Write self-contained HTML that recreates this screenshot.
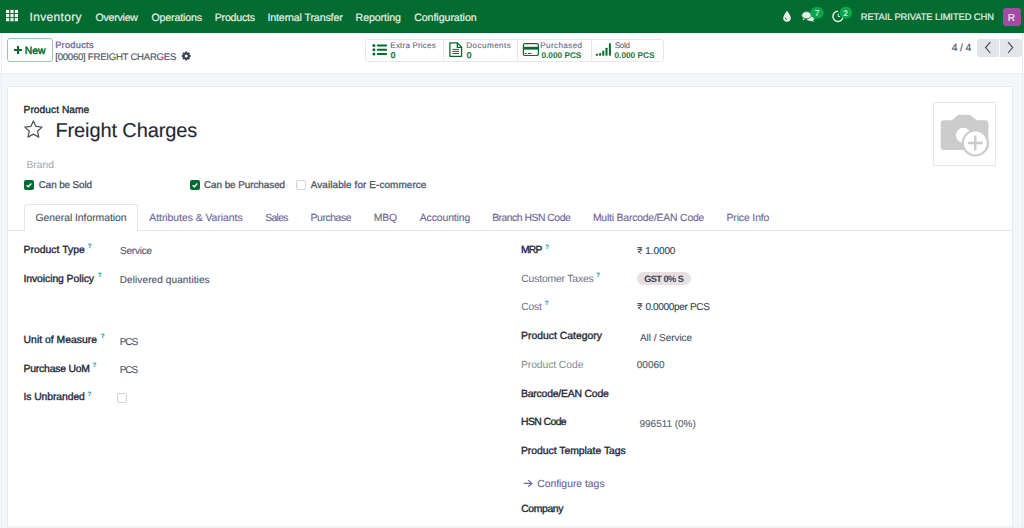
<!DOCTYPE html>
<html><head><meta charset="utf-8"><style>
html,body{text-rendering:geometricPrecision;margin:0;padding:0;width:1024px;height:528px;overflow:hidden;background:#fff;font-family:"Liberation Sans",sans-serif}
.t{position:absolute;white-space:nowrap}
.b{position:absolute}
</style></head><body>
<div class="b" style="left:0px;top:0px;width:1024px;height:33px;background:#026b2f"></div>
<svg class="b" style="left:0;top:0" width="40" height="33" viewBox="0 0 40 33"><rect x="6.00" y="9.90" width="3.2" height="3.2" fill="#eef4f0"/><rect x="6.00" y="14.00" width="3.2" height="3.2" fill="#eef4f0"/><rect x="6.00" y="18.10" width="3.2" height="3.2" fill="#eef4f0"/><rect x="10.40" y="9.90" width="3.2" height="3.2" fill="#eef4f0"/><rect x="10.40" y="14.00" width="3.2" height="3.2" fill="#eef4f0"/><rect x="10.40" y="18.10" width="3.2" height="3.2" fill="#eef4f0"/><rect x="14.80" y="9.90" width="3.2" height="3.2" fill="#eef4f0"/><rect x="14.80" y="14.00" width="3.2" height="3.2" fill="#eef4f0"/><rect x="14.80" y="18.10" width="3.2" height="3.2" fill="#eef4f0"/></svg>
<div class="t" style="left:29.62px;top:10px;font-size:12px;line-height:14px;font-weight:400;color:#e6efe8;letter-spacing:0.312px;-webkit-text-stroke:0.2px #e6efe8;">Inventory</div>
<div class="t" style="left:95.52px;top:12px;font-size:10.6px;line-height:13px;font-weight:400;color:#e6efe8;letter-spacing:-0.246px;-webkit-text-stroke:0.2px #e6efe8;">Overview</div>
<div class="t" style="left:151.52px;top:12px;font-size:10.6px;line-height:13px;font-weight:400;color:#e6efe8;letter-spacing:-0.154px;-webkit-text-stroke:0.2px #e6efe8;">Operations</div>
<div class="t" style="left:214.75px;top:12px;font-size:10.6px;line-height:13px;font-weight:400;color:#e6efe8;letter-spacing:-0.214px;-webkit-text-stroke:0.2px #e6efe8;">Products</div>
<div class="t" style="left:267.45px;top:12px;font-size:10.6px;line-height:13px;font-weight:400;color:#e6efe8;letter-spacing:-0.116px;-webkit-text-stroke:0.2px #e6efe8;">Internal Transfer</div>
<div class="t" style="left:355.55px;top:12px;font-size:10.6px;line-height:13px;font-weight:400;color:#e6efe8;letter-spacing:-0.064px;-webkit-text-stroke:0.2px #e6efe8;">Reporting</div>
<div class="t" style="left:414.17px;top:12px;font-size:10.6px;line-height:13px;font-weight:400;color:#e6efe8;letter-spacing:-0.041px;-webkit-text-stroke:0.2px #e6efe8;">Configuration</div>

<svg class="b" style="left:0;top:0" width="1024" height="33" viewBox="0 0 1024 33">
 <!-- drop -->
 <path d="M787 10.8 C787 10.8 783.2 15.6 783.2 18 A3.8 3.8 0 0 0 790.8 18 C790.8 15.6 787 10.8 787 10.8 Z" fill="#e6efe8"/>
 <path d="M785.3 17.8 a1.6 1.6 0 0 0 1.6 1.6" stroke="#026b2f" stroke-width="0.9" fill="none"/>
 <!-- chat -->
 <ellipse cx="806.5" cy="15.2" rx="4.8" ry="3.6" fill="#e6efe8"/>
 <path d="M803.5 17.5 L802.5 20.5 L806.5 18.3 Z" fill="#e6efe8"/>
 <ellipse cx="810.5" cy="18" rx="4" ry="3" fill="#e6efe8"/>
 <path d="M812.5 19.8 L814.2 22 L810 20.5 Z" fill="#e6efe8"/>
 <ellipse cx="806.5" cy="15.2" rx="4.8" ry="3.6" fill="#e6efe8" stroke="#026b2f" stroke-width="0.8"/>
 <!-- clock -->
 <path d="M843.1 16.3 A5.1 5.1 0 1 1 838 11.2" stroke="#e6efe8" stroke-width="1.5" fill="none"/>
 <path d="M838.2 13.6 V16.5 H840.2" stroke="#e6efe8" stroke-width="1" fill="none"/>
 <!-- badges -->
 <rect x="810.2" y="7" width="13.4" height="11.6" rx="5.8" fill="#0ba64c"/>
 <rect x="839.6" y="6.8" width="12.6" height="11.6" rx="5.8" fill="#0ba64c"/>
</svg>
<div class="t" style="left:814.79px;top:9px;font-size:8.2px;line-height:10px;font-weight:400;color:#e6f3ea;letter-spacing:0.069px;-webkit-text-stroke:0.1px #e6f3ea;">7</div>
<div class="t" style="left:843.29px;top:9px;font-size:8.2px;line-height:10px;font-weight:400;color:#e6f3ea;letter-spacing:0.069px;-webkit-text-stroke:0.1px #e6f3ea;">2</div>
<div class="t" style="left:860.75px;top:11px;font-size:9.4px;line-height:11px;font-weight:400;color:#e6efe8;letter-spacing:-0.095px;-webkit-text-stroke:0.2px #e6efe8;">RETAIL PRIVATE LIMITED CHN</div>
<div class="b" style="left:1003px;top:8px;width:17.5px;height:18px;background:#a34ca4;border-radius:3px"></div>
<div class="t" style="left:1007.70px;top:13px;font-size:10px;line-height:12px;font-weight:400;color:#f4e8f4;letter-spacing:1.000px;-webkit-text-stroke:0.12px #f4e8f4;">R</div>
<div class="b" style="left:0px;top:33px;width:1024px;height:40px;background:#ffffff"></div>
<div class="b" style="left:7px;top:38px;width:46px;height:24px;border:1px solid #9cc7aa;border-radius:3px;box-sizing:border-box;background:#fff"></div>
<div class="b" style="left:14.4px;top:48.8px;width:7.6px;height:2.3px;background:#026b2f"></div>
<div class="b" style="left:17.05px;top:45.6px;width:2.3px;height:8.2px;background:#026b2f"></div>
<div class="t" style="left:24.77px;top:46px;font-size:10.4px;line-height:12px;font-weight:400;color:#026b2f;letter-spacing:-0.060px;-webkit-text-stroke:0.45px #026b2f;">New</div>
<div class="t" style="left:55.16px;top:40px;font-size:9.2px;line-height:11px;font-weight:400;color:#6e6698;letter-spacing:0.295px;-webkit-text-stroke:0.3px #6e6698;">Products</div>
<div class="t" style="left:55.23px;top:52px;font-size:9.6px;line-height:12px;font-weight:400;color:#4b5563;letter-spacing:-0.253px;-webkit-text-stroke:0.15px #4b5563;">[00060] FREIGHT CHARGES</div>
<svg class="b" style="left:0;top:0" width="300" height="80" viewBox="0 0 300 80">
<path fill="#374151" fill-rule="evenodd" d="M189.29 54.84 L190.59 55.02 L190.59 56.98 L189.29 57.16 L189.21 57.36 L190.00 58.41 L188.61 59.80 L187.56 59.01 L187.36 59.09 L187.18 60.39 L185.22 60.39 L185.04 59.09 L184.84 59.01 L183.79 59.80 L182.40 58.41 L183.19 57.36 L183.11 57.16 L181.81 56.98 L181.81 55.02 L183.11 54.84 L183.19 54.64 L182.40 53.59 L183.79 52.20 L184.84 52.99 L185.04 52.91 L185.22 51.61 L187.18 51.61 L187.36 52.91 L187.56 52.99 L188.61 52.20 L190.00 53.59 L189.21 54.64 Z M187.70 56.00 A1.5 1.5 0 1 0 184.70 56.00 A1.5 1.5 0 1 0 187.70 56.00 Z"/></svg>
<div class="b" style="left:364.5px;top:39px;width:299px;height:22.5px;border:1px solid #e6e9ec;border-radius:3px;box-sizing:border-box"></div>
<div class="b" style="left:443px;top:39.5px;width:1px;height:21.5px;background:#e6e9ec"></div>
<div class="b" style="left:517px;top:39.5px;width:1px;height:21.5px;background:#e6e9ec"></div>
<div class="b" style="left:590.5px;top:39.5px;width:1px;height:21.5px;background:#e6e9ec"></div>
<div class="t" style="left:390.35px;top:41px;font-size:8.1px;line-height:10px;font-weight:400;color:#646c77;letter-spacing:0.161px;-webkit-text-stroke:0.12px #646c77;">Extra Prices</div>
<div class="t" style="left:390.67px;top:50px;font-size:8.3px;line-height:10px;font-weight:400;color:#17743f;letter-spacing:0.716px;-webkit-text-stroke:0.45px #17743f;">0</div>
<div class="t" style="left:466.35px;top:41px;font-size:8.1px;line-height:10px;font-weight:400;color:#646c77;letter-spacing:0.431px;-webkit-text-stroke:0.12px #646c77;">Documents</div>
<div class="t" style="left:466.67px;top:50px;font-size:8.3px;line-height:10px;font-weight:400;color:#17743f;letter-spacing:0.716px;-webkit-text-stroke:0.45px #17743f;">0</div>
<div class="t" style="left:540.35px;top:41px;font-size:8.1px;line-height:10px;font-weight:400;color:#646c77;letter-spacing:0.370px;-webkit-text-stroke:0.12px #646c77;">Purchased</div>
<div class="t" style="left:541.47px;top:50px;font-size:8.3px;line-height:10px;font-weight:700;color:#17743f;letter-spacing:-0.026px;">0.000 PCS</div>
<div class="t" style="left:614.64px;top:41px;font-size:8.1px;line-height:10px;font-weight:400;color:#646c77;letter-spacing:-0.270px;-webkit-text-stroke:0.12px #646c77;">Sold</div>
<div class="t" style="left:614.47px;top:50px;font-size:8.3px;line-height:10px;font-weight:700;color:#17743f;letter-spacing:-0.001px;">0.000 PCS</div>
<svg class="b" style="left:0;top:0" width="1024" height="80" viewBox="0 0 1024 80">
 <g fill="#026b2f">
  <circle cx="373.9" cy="45.4" r="1.5"/><circle cx="373.9" cy="49.7" r="1.5"/><circle cx="373.9" cy="54" r="1.5"/>
  <rect x="376.8" y="44.4" width="10.3" height="2.1" rx="0.8"/><rect x="376.8" y="48.7" width="10.3" height="2.1" rx="0.8"/><rect x="376.8" y="53" width="10.3" height="2.1" rx="0.8"/>
 </g>
 <g fill="none" stroke="#026b2f" stroke-width="1.3">
  <path d="M449.9 42.8 H457.3 L461.6 47.1 V56.3 H449.9 Z" stroke-linejoin="round"/>
  <path d="M457.3 43 V47.4 H461.4"/>
  <path d="M452.4 49.4 H459 M452.4 51.4 H459 M452.4 53.5 H459" stroke-width="1"/>
 </g>
 <g>
  <rect x="523.4" y="43.6" width="15" height="11.9" rx="1.6" fill="none" stroke="#026b2f" stroke-width="1.2"/>
  <rect x="523.4" y="46.8" width="15" height="2.8" fill="#026b2f"/>
  <rect x="524.8" y="53" width="1.8" height="1" fill="#026b2f"/><rect x="527.8" y="53" width="3.6" height="1" fill="#026b2f"/>
 </g>
 <g fill="#026b2f">
  <rect x="595.9" y="53.7" width="2.1" height="2" rx="0.4"/>
  <rect x="599.1" y="53" width="2" height="2.7" rx="0.4"/>
  <rect x="602.3" y="50.7" width="2" height="5" rx="0.4"/>
  <rect x="605.5" y="47.8" width="2" height="7.9" rx="0.4"/>
  <rect x="608.9" y="43.2" width="2" height="12.5" rx="0.4"/>
 </g>
</svg>
<div class="t" style="left:951.79px;top:43px;font-size:10.4px;line-height:12px;font-weight:400;color:#4b5563;letter-spacing:-0.177px;-webkit-text-stroke:0.12px #4b5563;">4 / 4</div>
<div class="b" style="left:977px;top:39px;width:22px;height:18px;background:#e2e5e9;border-radius:3px 0 0 3px"></div>
<div class="b" style="left:1000px;top:39px;width:22px;height:18px;background:#e2e5e9;border-radius:0 3px 3px 0"></div>
<svg class="b" style="left:0;top:0" width="1024" height="70" viewBox="0 0 1024 70">
 <path d="M990.3 42.2 L985.6 47.6 L990.3 53" stroke="#3f4753" stroke-width="1.1" fill="none"/>
 <path d="M1008 42.2 L1012.7 47.6 L1008 53" stroke="#3f4753" stroke-width="1.1" fill="none"/>
</svg>
<div class="b" style="left:0px;top:73px;width:1024px;height:455px;background:#f4f7f9"></div>
<div class="b" style="left:0px;top:73px;width:1024px;height:1px;background:#eceff1"></div>
<div class="b" style="left:7px;top:85.5px;width:1006px;height:441px;background:#fff;border:1px solid #e7eaed;border-bottom:none;border-radius:2px 2px 0 0;box-sizing:border-box"></div>
<div class="b" style="left:0px;top:526px;width:1024px;height:2px;background:#f1f3f5"></div>
<div class="b" style="left:1px;top:33px;width:1px;height:495px;background:#eceff1"></div>
<div class="b" style="left:1022px;top:33px;width:1px;height:495px;background:#e9ecef"></div>
<div class="t" style="left:23.58px;top:105px;font-size:10.2px;line-height:12px;font-weight:400;color:#1f2937;letter-spacing:0.045px;-webkit-text-stroke:0.35px #1f2937;">Product Name</div>
<svg class="b" style="left:0;top:0" width="60" height="150" viewBox="0 0 60 150">
<path d="M33.4 120.9 L36 126.4 L42 127.1 L37.5 131.2 L38.8 137.1 L33.4 134.1 L28 137.1 L29.3 131.2 L24.8 127.1 L30.8 126.4 Z" fill="none" stroke="#4b5563" stroke-width="1.25" stroke-linejoin="round"/></svg>
<div class="t" style="left:55.40px;top:119px;font-size:20px;line-height:24px;font-weight:400;color:#1f2937;letter-spacing:-0.107px;-webkit-text-stroke:0.12px #1f2937;">Freight Charges</div>
<div class="b" style="left:933px;top:102px;width:63px;height:64px;border:1px solid #e8e8e8;box-sizing:border-box;background:#fff"></div>
<svg class="b" style="left:0;top:0" width="1024" height="200" viewBox="0 0 1024 200">
 <path d="M944 120.3 H952 L958.3 114.7 H969.7 L977 120.3 H985.2 Q988.4 120.3 988.4 123.5 V146.7 Q988.4 149.9 985.2 149.9 H944 Q940.7 149.9 940.7 146.7 V123.5 Q940.7 120.3 944 120.3 Z" fill="#cccccc"/>
 <circle cx="963.4" cy="135.2" r="7.5" fill="#ffffff"/>
 <circle cx="975.3" cy="143" r="13.6" fill="#cccccc"/>
 <circle cx="975.3" cy="143" r="11.4" fill="#ffffff"/>
 <path d="M975.3 135.6 V150.4 M967.9 143 H982.7" stroke="#cccccc" stroke-width="2.4"/>
</svg>
<div class="t" style="left:26.38px;top:160px;font-size:10.2px;line-height:12px;font-weight:400;color:#a9adb2;letter-spacing:0.099px;-webkit-text-stroke:0.12px #a9adb2;">Brand</div>
<div class="b" style="left:24px;top:180px;width:10px;height:10px;background:#026b2f;border-radius:2px"></div>
<svg class="b" style="left:24px;top:180px" width="10" height="10" viewBox="0 0 10 10"><path d="M2.6 5.2 L4.3 6.8 L7.4 3.5" stroke="#fff" stroke-width="1.3" fill="none"/></svg>
<div class="t" style="left:38.71px;top:180px;font-size:9.9px;line-height:12px;font-weight:400;color:#4b5563;letter-spacing:-0.096px;-webkit-text-stroke:0.3px #4b5563;">Can be Sold</div>
<div class="b" style="left:190.4px;top:180px;width:10px;height:10px;background:#026b2f;border-radius:2px"></div>
<svg class="b" style="left:190.4px;top:180px" width="10" height="10" viewBox="0 0 10 10"><path d="M2.6 5.2 L4.3 6.8 L7.4 3.5" stroke="#fff" stroke-width="1.3" fill="none"/></svg>
<div class="t" style="left:204.00px;top:180px;font-size:9.9px;line-height:12px;font-weight:400;color:#4b5563;letter-spacing:-0.049px;-webkit-text-stroke:0.3px #4b5563;">Can be Purchased</div>
<div class="b" style="left:295.6px;top:180px;width:10.2px;height:10.2px;border:1px solid #cfd3d8;border-radius:2px;box-sizing:border-box;background:#fff"></div>
<div class="t" style="left:310.70px;top:180px;font-size:9.9px;line-height:12px;font-weight:400;color:#4b5563;letter-spacing:0.121px;-webkit-text-stroke:0.3px #4b5563;">Available for E-commerce</div>
<div class="b" style="left:8px;top:230px;width:1004px;height:1px;background:#e3e6ea"></div>
<div class="b" style="left:24.4px;top:204.4px;width:113.3px;height:27px;background:#fff;border:1px solid #e3e6ea;border-bottom:none;border-radius:3px 3px 0 0;box-sizing:border-box"></div>
<div class="t" style="left:35.48px;top:213px;font-size:10.4px;line-height:12px;font-weight:400;color:#4b5563;letter-spacing:-0.038px;-webkit-text-stroke:0.12px #4b5563;">General Information</div>
<div class="t" style="left:149.30px;top:213px;font-size:10.4px;line-height:12px;font-weight:400;color:#6e6698;letter-spacing:-0.033px;-webkit-text-stroke:0.12px #6e6698;">Attributes &amp; Variants</div>
<div class="t" style="left:265.13px;top:213px;font-size:10.4px;line-height:12px;font-weight:400;color:#6e6698;letter-spacing:-0.642px;-webkit-text-stroke:0.12px #6e6698;">Sales</div>
<div class="t" style="left:310.57px;top:213px;font-size:10.4px;line-height:12px;font-weight:400;color:#6e6698;letter-spacing:-0.434px;-webkit-text-stroke:0.12px #6e6698;">Purchase</div>
<div class="t" style="left:373.77px;top:213px;font-size:10.4px;line-height:12px;font-weight:400;color:#6e6698;letter-spacing:-0.230px;-webkit-text-stroke:0.12px #6e6698;">MBQ</div>
<div class="t" style="left:419.80px;top:213px;font-size:10.4px;line-height:12px;font-weight:400;color:#6e6698;letter-spacing:-0.106px;-webkit-text-stroke:0.12px #6e6698;">Accounting</div>
<div class="t" style="left:492.17px;top:213px;font-size:10.4px;line-height:12px;font-weight:400;color:#6e6698;letter-spacing:-0.496px;-webkit-text-stroke:0.12px #6e6698;">Branch HSN Code</div>
<div class="t" style="left:592.92px;top:213px;font-size:10.4px;line-height:12px;font-weight:400;color:#6e6698;letter-spacing:-0.193px;-webkit-text-stroke:0.12px #6e6698;">Multi Barcode/EAN Code</div>
<div class="t" style="left:726.47px;top:213px;font-size:10.4px;line-height:12px;font-weight:400;color:#6e6698;letter-spacing:-0.110px;-webkit-text-stroke:0.12px #6e6698;">Price Info</div>
<div class="t" style="left:23.57px;top:245px;font-size:10.4px;line-height:12px;font-weight:400;color:#1f2937;letter-spacing:0.009px;-webkit-text-stroke:0.35px #1f2937;">Product Type</div>
<div class="t" style="left:87.71px;top:243px;font-size:6.4px;line-height:8px;font-weight:700;color:#1a9bb5;letter-spacing:-0.264px;-webkit-text-stroke:0.12px #1a9bb5;">?</div>
<div class="t" style="left:120.05px;top:246px;font-size:10px;line-height:12px;font-weight:400;color:#4b5563;letter-spacing:-0.208px;-webkit-text-stroke:0.12px #4b5563;">Service</div>
<div class="t" style="left:23.46px;top:274px;font-size:10.4px;line-height:12px;font-weight:400;color:#1f2937;letter-spacing:-0.075px;-webkit-text-stroke:0.35px #1f2937;">Invoicing Policy</div>
<div class="t" style="left:97.71px;top:272px;font-size:6.4px;line-height:8px;font-weight:700;color:#1a9bb5;letter-spacing:-0.264px;-webkit-text-stroke:0.12px #1a9bb5;">?</div>
<div class="t" style="left:119.70px;top:275px;font-size:10px;line-height:12px;font-weight:400;color:#4b5563;letter-spacing:0.111px;-webkit-text-stroke:0.12px #4b5563;">Delivered quantities</div>
<div class="t" style="left:23.62px;top:335px;font-size:10.4px;line-height:12px;font-weight:400;color:#1f2937;letter-spacing:0.002px;-webkit-text-stroke:0.35px #1f2937;">Unit of Measure</div>
<div class="t" style="left:100.71px;top:333px;font-size:6.4px;line-height:8px;font-weight:700;color:#1a9bb5;letter-spacing:-0.264px;-webkit-text-stroke:0.12px #1a9bb5;">?</div>
<div class="t" style="left:119.70px;top:337px;font-size:10px;line-height:12px;font-weight:400;color:#4b5563;letter-spacing:-1.000px;-webkit-text-stroke:0.12px #4b5563;">PCS</div>
<div class="t" style="left:23.57px;top:364px;font-size:10.4px;line-height:12px;font-weight:400;color:#1f2937;letter-spacing:-0.207px;-webkit-text-stroke:0.35px #1f2937;">Purchase UoM</div>
<div class="t" style="left:92.41px;top:362px;font-size:6.4px;line-height:8px;font-weight:700;color:#1a9bb5;letter-spacing:-0.264px;-webkit-text-stroke:0.12px #1a9bb5;">?</div>
<div class="t" style="left:119.70px;top:365px;font-size:10px;line-height:12px;font-weight:400;color:#4b5563;letter-spacing:-1.000px;-webkit-text-stroke:0.12px #4b5563;">PCS</div>
<div class="t" style="left:23.46px;top:392px;font-size:10.4px;line-height:12px;font-weight:400;color:#1f2937;letter-spacing:-0.085px;-webkit-text-stroke:0.35px #1f2937;">Is Unbranded</div>
<div class="t" style="left:87.41px;top:391px;font-size:6.4px;line-height:8px;font-weight:700;color:#1a9bb5;letter-spacing:-0.264px;-webkit-text-stroke:0.12px #1a9bb5;">?</div>
<div class="b" style="left:117px;top:393px;width:10.2px;height:10.2px;border:1px solid #cfd3d8;border-radius:2px;box-sizing:border-box;background:#fff"></div>
<div class="t" style="left:520.97px;top:245px;font-size:10.4px;line-height:12px;font-weight:400;color:#1f2937;letter-spacing:-0.868px;-webkit-text-stroke:0.35px #1f2937;">MRP</div>
<div class="t" style="left:545.21px;top:244px;font-size:6.4px;line-height:8px;font-weight:700;color:#1a9bb5;letter-spacing:-0.264px;-webkit-text-stroke:0.12px #1a9bb5;">?</div>
<div class="t" style="left:645.25px;top:246px;font-size:10px;line-height:12px;font-weight:400;color:#374151;letter-spacing:-0.080px;-webkit-text-stroke:0.12px #374151;">1.0000</div>
<svg class="b" style="left:0;top:0" width="1024" height="528" viewBox="0 0 1024 528"><path d="M637.4000000000001 247.6 H642.2 M637.4000000000001 249.6 H642.2 M638.1 247.6 Q641.5 247.6 641.5 249.7 Q641.5 251.6 638.0 251.6 L641.2 254.1" stroke="#3d4550" stroke-width="0.9" fill="none"/></svg>
<div class="t" style="left:521.28px;top:274px;font-size:10.4px;line-height:12px;font-weight:400;color:#6b7280;letter-spacing:-0.188px;">Customer Taxes</div>
<div class="t" style="left:596.31px;top:272px;font-size:6.4px;line-height:8px;font-weight:700;color:#1a9bb5;letter-spacing:-0.264px;-webkit-text-stroke:0.12px #1a9bb5;">?</div>
<div class="b" style="left:637px;top:271.5px;width:54px;height:13.3px;background:#e9dfe0;border-radius:7px"></div>
<div class="t" style="left:644.13px;top:274px;font-size:9.2px;line-height:11px;font-weight:700;color:#374151;letter-spacing:-0.533px;">GST 0% S</div>
<div class="t" style="left:521.28px;top:302px;font-size:10.4px;line-height:12px;font-weight:400;color:#6b7280;letter-spacing:-0.267px;">Cost</div>
<div class="t" style="left:544.71px;top:300px;font-size:6.4px;line-height:8px;font-weight:700;color:#1a9bb5;letter-spacing:-0.264px;-webkit-text-stroke:0.12px #1a9bb5;">?</div>
<div class="t" style="left:645.40px;top:302px;font-size:10px;line-height:12px;font-weight:400;color:#374151;letter-spacing:-0.325px;-webkit-text-stroke:0.12px #374151;">0.0000per PCS</div>
<svg class="b" style="left:0;top:0" width="1024" height="528" viewBox="0 0 1024 528"><path d="M637.4000000000001 303.59999999999997 H642.2 M637.4000000000001 305.59999999999997 H642.2 M638.1 303.59999999999997 Q641.5 303.59999999999997 641.5 305.7 Q641.5 307.59999999999997 638.0 307.59999999999997 L641.2 310.09999999999997" stroke="#3d4550" stroke-width="0.9" fill="none"/></svg>
<div class="t" style="left:520.97px;top:331px;font-size:10.4px;line-height:12px;font-weight:400;color:#1f2937;letter-spacing:0.008px;-webkit-text-stroke:0.35px #1f2937;">Product Category</div>
<div class="t" style="left:640.00px;top:333px;font-size:10px;line-height:12px;font-weight:400;color:#4b5563;letter-spacing:-0.062px;-webkit-text-stroke:0.12px #4b5563;">All / Service</div>
<div class="t" style="left:520.97px;top:360px;font-size:10.4px;line-height:12px;font-weight:400;color:#858b93;letter-spacing:-0.100px;">Product Code</div>
<div class="t" style="left:636.80px;top:360px;font-size:10px;line-height:12px;font-weight:400;color:#4b5563;letter-spacing:0.012px;-webkit-text-stroke:0.12px #4b5563;">00060</div>
<div class="t" style="left:520.97px;top:389px;font-size:10.4px;line-height:12px;font-weight:400;color:#1f2937;letter-spacing:-0.189px;-webkit-text-stroke:0.35px #1f2937;">Barcode/EAN Code</div>
<div class="t" style="left:520.97px;top:417px;font-size:10.4px;line-height:12px;font-weight:400;color:#1f2937;letter-spacing:-0.573px;-webkit-text-stroke:0.35px #1f2937;">HSN Code</div>
<div class="t" style="left:639.55px;top:419px;font-size:10px;line-height:12px;font-weight:400;color:#5b6470;letter-spacing:-0.025px;-webkit-text-stroke:0.12px #5b6470;">996511 (0%)</div>
<div class="t" style="left:520.97px;top:446px;font-size:10.4px;line-height:12px;font-weight:400;color:#1f2937;letter-spacing:-0.025px;-webkit-text-stroke:0.35px #1f2937;">Product Template Tags</div>
<svg class="b" style="left:0;top:0" width="1024" height="528" viewBox="0 0 1024 528">
<path d="M523.8 483.4 H531.6 M528.3 480.1 L531.7 483.4 L528.3 486.7" stroke="#71639e" stroke-width="1.2" fill="none"/></svg>
<div class="t" style="left:537.18px;top:479px;font-size:10.4px;line-height:12px;font-weight:400;color:#6e6698;letter-spacing:-0.013px;-webkit-text-stroke:0.12px #6e6698;">Configure tags</div>
<div class="t" style="left:521.28px;top:504px;font-size:10.4px;line-height:12px;font-weight:400;color:#1f2937;letter-spacing:-0.399px;-webkit-text-stroke:0.35px #1f2937;">Company</div>
</body></html>
